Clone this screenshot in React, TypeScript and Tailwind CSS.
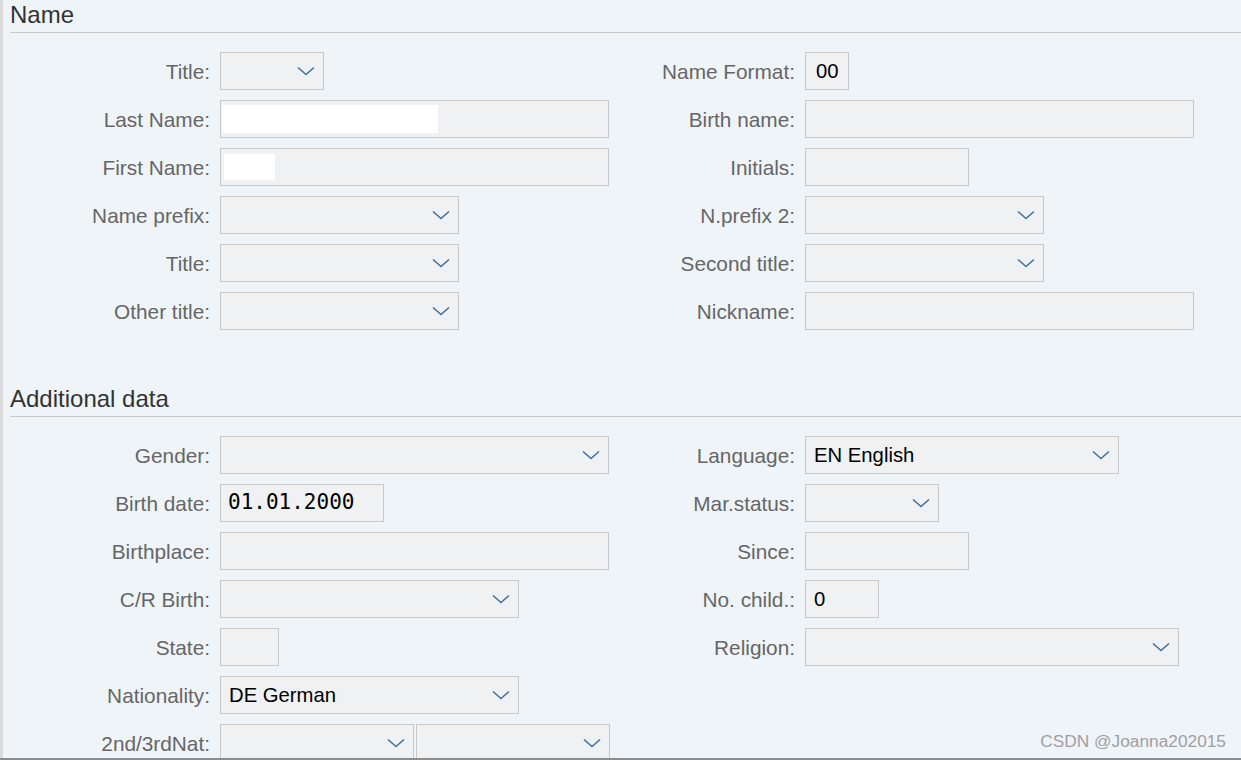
import { ReactNode } from "react";

const font = { fontFamily: '"Liberation Sans", Arial, sans-serif' };

function Chevron() {
  return (
    <svg width="18" height="10" viewBox="0 0 18 10" className="shrink-0">
      <path d="M1 1.5 L9 8.5 L17 1.5" fill="none" stroke="#3f72a0" strokeWidth="1.6" />
    </svg>
  );
}

function Field({
  w,
  select,
  value,
  mono,
  pad = "pl-[8px]",
  fill,
}: {
  w: string;
  select?: boolean;
  value?: string;
  mono?: boolean;
  pad?: string;
  fill?: ReactNode;
}) {
  return (
    <div
      className={`flex h-[38px] shrink-0 items-center border border-[#c8c8c8] bg-[#f0f1f3] ${w}`}
    >
      {fill}
      {value && (
        <span
          className={
            mono
              ? "pl-[7px] font-['DejaVu_Sans_Mono',monospace] text-[21px] text-black"
              : `${pad} text-[20.3px] text-black`
          }
        >
          {value}
        </span>
      )}
      {select && (
        <span className="ml-auto mr-[8px] flex items-center">
          <Chevron />
        </span>
      )}
    </div>
  );
}

function Label({ text, w }: { text: string; w: string }) {
  return (
    <div className={`shrink-0 pr-[10px] text-right text-[20.8px] leading-[40px] text-[#666666] ${w}`}>
      {text}
    </div>
  );
}

function Row({ left, right }: { left: ReactNode; right?: ReactNode }) {
  return (
    <div className="flex h-[38px]">
      <div className="flex w-[608px] shrink-0">{left}</div>
      {right && <div className="flex">{right}</div>}
    </div>
  );
}

function L({ label, children }: { label: string; children: ReactNode }) {
  return (
    <>
      <Label text={label} w="w-[220px]" />
      {children}
    </>
  );
}

function R({ label, children }: { label: string; children: ReactNode }) {
  return (
    <>
      <Label text={label} w="w-[197px]" />
      {children}
    </>
  );
}

function Heading({ text }: { text: string }) {
  return (
    <div className="ml-[10px] h-[33px] border-b border-[#c8c8c8] pt-[3px] text-[24px] leading-[24px] text-[#333333]">
      {text}
    </div>
  );
}

export default function App() {
  return (
    <div
      style={font}
      className="relative flex h-[760px] w-[1241px] overflow-hidden border-b-2 border-[#8c8c8c] bg-[#eff4f9]"
    >
      <div className="w-[3px] shrink-0 bg-[#dadada]" />
      <div className="flex-1 -ml-[3px]">
        <Heading text="Name" />
        <div className="mt-[19px] flex flex-col gap-[10px]">
          <Row
            left={<L label="Title:"><Field w="w-[104px]" select /></L>}
            right={<R label="Name Format:"><Field w="w-[44px]" value="00" pad="pl-[10px]" /></R>}
          />
          <Row
            left={
              <L label="Last Name:">
                <Field
                  w="w-[389px]"
                  fill={<div className="ml-[1px] h-[28px] w-[216px] bg-white" />}
                />
              </L>
            }
            right={<R label="Birth name:"><Field w="w-[389px]" /></R>}
          />
          <Row
            left={
              <L label="First Name:">
                <Field
                  w="w-[389px]"
                  fill={<div className="ml-[3px] h-[26px] w-[51px] bg-white" />}
                />
              </L>
            }
            right={<R label="Initials:"><Field w="w-[164px]" /></R>}
          />
          <Row
            left={<L label="Name prefix:"><Field w="w-[239px]" select /></L>}
            right={<R label="N.prefix 2:"><Field w="w-[239px]" select /></R>}
          />
          <Row
            left={<L label="Title:"><Field w="w-[239px]" select /></L>}
            right={<R label="Second title:"><Field w="w-[239px]" select /></R>}
          />
          <Row
            left={<L label="Other title:"><Field w="w-[239px]" select /></L>}
            right={<R label="Nickname:"><Field w="w-[389px]" /></R>}
          />
        </div>

        <div className="mt-[54px]">
          <Heading text="Additional data" />
        </div>
        <div className="mt-[19px] flex flex-col gap-[10px]">
          <Row
            left={<L label="Gender:"><Field w="w-[389px]" select /></L>}
            right={<R label="Language:"><Field w="w-[314px]" select value="EN English" /></R>}
          />
          <Row
            left={<L label="Birth date:"><Field w="w-[164px]" value="01.01.2000" mono /></L>}
            right={<R label="Mar.status:"><Field w="w-[134px]" select /></R>}
          />
          <Row
            left={<L label="Birthplace:"><Field w="w-[389px]" /></L>}
            right={<R label="Since:"><Field w="w-[164px]" /></R>}
          />
          <Row
            left={<L label="C/R Birth:"><Field w="w-[299px]" select /></L>}
            right={<R label="No. child.:"><Field w="w-[74px]" value="0" /></R>}
          />
          <Row
            left={<L label="State:"><Field w="w-[59px]" /></L>}
            right={<R label="Religion:"><Field w="w-[374px]" select /></R>}
          />
          <Row left={<L label="Nationality:"><Field w="w-[299px]" select value="DE German" /></L>} />
          <Row
            left={
              <L label="2nd/3rdNat:">
                <div className="flex gap-[2px]">
                  <Field w="w-[194px]" select />
                  <Field w="w-[194px]" select />
                </div>
              </L>
            }
          />
        </div>
      </div>
      <div className="absolute bottom-[3px] right-[15px] text-[17.3px] text-[#a0a0a0]">
        CSDN @Joanna202015
      </div>
    </div>
  );
}
